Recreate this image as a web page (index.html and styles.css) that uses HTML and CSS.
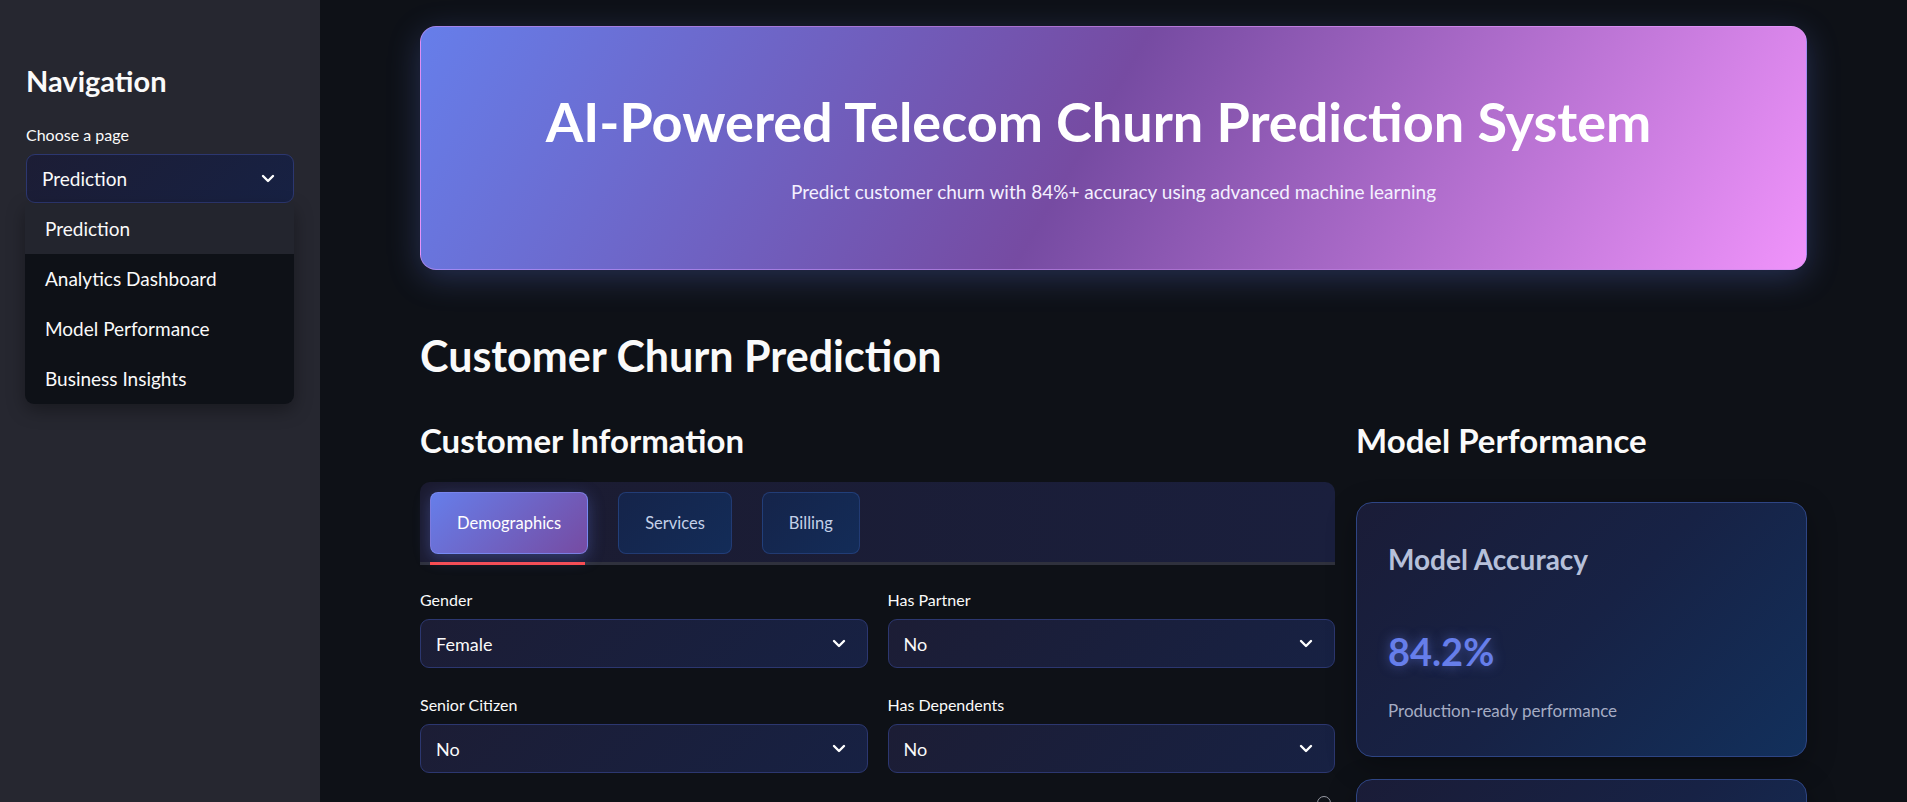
FILE: index.html
```html
<!DOCTYPE html>
<html lang="en">
<head>
<meta charset="utf-8">
<title>AI-Powered Telecom Churn Prediction System</title>
<link rel="stylesheet" href="styles.css">
</head>
<body>
<div class="app">
  <aside class="sidebar">
    <h2 class="side-title">Navigation</h2>
    <div class="side-label">Choose a page</div>
    <div class="side-select-wrap">
      <div class="select side-select">
        <span>Prediction</span>
        <svg class="chev" viewBox="0 0 14 9" width="14" height="9"><path d="M2 2l5 5 5-5" fill="none" stroke="#fff" stroke-width="2.4" stroke-linecap="round" stroke-linejoin="round"/></svg>
      </div>
      <ul class="menu">
        <li class="menu-item active">Prediction</li>
        <li class="menu-item">Analytics Dashboard</li>
        <li class="menu-item">Model Performance</li>
        <li class="menu-item">Business Insights</li>
      </ul>
    </div>
  </aside>
  <main class="main">
    <section class="hero">
      <h1 class="hero-title">AI-Powered Telecom Churn Prediction System</h1>
      <p class="hero-sub">Predict customer churn with 84%+ accuracy using advanced machine learning</p>
    </section>
    <h2 class="page-title">Customer Churn Prediction</h2>
    <div class="cols">
      <div class="col-left">
        <h3 class="sec-title">Customer Information</h3>
        <div class="tabs">
          <div class="tab-row">
            <div class="tab active">Demographics</div>
            <div class="tab">Services</div>
            <div class="tab">Billing</div>
          </div>
          <div class="tab-line"><div class="tab-ind"></div></div>
        </div>
        <div class="form">
          <div class="field">
            <label class="flabel">Gender</label>
            <div class="select"><span>Female</span><svg class="chev" viewBox="0 0 14 9" width="14" height="9"><path d="M2 2l5 5 5-5" fill="none" stroke="#fff" stroke-width="2.4" stroke-linecap="round" stroke-linejoin="round"/></svg></div>
          </div>
          <div class="field">
            <label class="flabel">Has Partner</label>
            <div class="select"><span>No</span><svg class="chev" viewBox="0 0 14 9" width="14" height="9"><path d="M2 2l5 5 5-5" fill="none" stroke="#fff" stroke-width="2.4" stroke-linecap="round" stroke-linejoin="round"/></svg></div>
          </div>
          <div class="field">
            <label class="flabel">Senior Citizen</label>
            <div class="select"><span>No</span><svg class="chev" viewBox="0 0 14 9" width="14" height="9"><path d="M2 2l5 5 5-5" fill="none" stroke="#fff" stroke-width="2.4" stroke-linecap="round" stroke-linejoin="round"/></svg></div>
          </div>
          <div class="field">
            <label class="flabel">Has Dependents</label>
            <div class="select"><span>No</span><svg class="chev" viewBox="0 0 14 9" width="14" height="9"><path d="M2 2l5 5 5-5" fill="none" stroke="#fff" stroke-width="2.4" stroke-linecap="round" stroke-linejoin="round"/></svg></div>
          </div>
          <div class="field wide">
            <div class="help-row"><span class="help"></span></div>
          </div>
        </div>
      </div>
      <div class="col-right">
        <h3 class="sec-title">Model Performance</h3>
        <div class="card">
          <div class="card-title">Model Accuracy</div>
          <div class="card-value">84.2%</div>
          <div class="card-note">Production-ready performance</div>
        </div>
        <div class="card card-next"></div>
      </div>
    </div>
  </main>
</div>
</body>
</html>
```

FILE: styles.css
```css
* { box-sizing: border-box; }
html, body { margin: 0; padding: 0; }
body {
  background: #0e1117;
  color: #fafafa;
  font-family: Lato, "Noto Sans", sans-serif;
  width: 1907px;
  height: 802px;
  overflow: hidden;
}
.app { display: flex; height: 802px; }

/* Sidebar */
.sidebar {
  width: 320px;
  flex: none;
  background: #262730;
  padding: 64px 26px 0 26px;
}
.side-title {
  margin: 0;
  font-size: 29px;
  font-weight: 700;
  line-height: 1.2;
  color: #fafafa;
}
.side-label {
  margin-top: 25px;
  font-size: 16px;
  line-height: 22px;
  color: #fafafa;
}
.side-select-wrap { position: relative; margin-top: 8px; }
.select {
  height: 49px;
  border: 1px solid #2c3770;
  border-radius: 9px;
  background: linear-gradient(135deg, #1c1d35 0%, #172143 100%);
  display: flex;
  align-items: center;
  justify-content: space-between;
  padding: 0 21px 0 15px;
  font-size: 18px;
  color: #fafafa;
}
.side-select { padding: 0 18px 0 15px; font-size: 19px; }
.chev { display: block; }
.menu {
  position: absolute;
  left: -1px;
  right: 0;
  top: 50px;
  margin: 0;
  padding: 0;
  list-style: none;
  background: #0e1117;
  border-radius: 0 0 9px 9px;
  box-shadow: 0 6px 18px rgba(0,0,0,0.35);
  overflow: hidden;
}
.menu-item {
  height: 50px;
  line-height: 50px;
  padding-left: 20px;
  font-size: 19px;
  color: #fafafa;
}
.menu-item.active { background: #23252e; }

/* Main */
.main {
  flex: 1;
  padding: 26px 100px 0 100px;
  min-width: 0;
}
.hero {
  height: 244px;
  border-radius: 16px;
  border: 1px solid rgba(220,150,250,0.5);
  background: linear-gradient(120deg, #667eea 0%, #764ba2 48%, #f093fb 100%);
  box-shadow: 0 8px 32px rgba(102,126,234,0.28);
  text-align: center;
  padding-top: 63px;
}
.hero-title {
  margin: 0;
  padding-right: 30px;
  font-size: 54px;
  font-weight: 700;
  line-height: 1.2;
  color: #ffffff;
}
.hero-sub {
  margin: 26px 0 0 0;
  font-size: 19px;
  line-height: 1.2;
  color: #f4f0ff;
}
.page-title {
  margin: 60px 0 0 0;
  font-size: 43px;
  font-weight: 700;
  line-height: 1.2;
  color: #fafafa;
}
.cols {
  display: grid;
  grid-template-columns: 915px 451px;
  column-gap: 21px;
  margin-top: 39px;
}
.sec-title {
  margin: 0;
  font-size: 33px;
  font-weight: 700;
  line-height: 1.2;
  color: #fafafa;
}

/* Tabs */
.tabs {
  margin-top: 22px;
  border-radius: 10px 10px 0 0;
  background: linear-gradient(90deg, #1b1b30 0%, #1a1f3d 100%);
  padding: 10px 0 0 0;
}
.tab-row { display: flex; gap: 30px; padding-left: 10px; }
.tab {
  height: 62px;
  display: flex;
  align-items: center;
  padding: 0 26px;
  border-radius: 8px;
  border: 1px solid rgba(60,100,190,0.35);
  background: linear-gradient(135deg, #15244a 0%, #132c58 100%);
  font-size: 16.5px;
  color: #c3d0e8;
}
.tab.active {
  background: linear-gradient(135deg, #667eea 0%, #764ba2 100%);
  border-color: rgba(130,150,255,0.6);
  color: #ffffff;
  box-shadow: 0 4px 16px rgba(102,126,234,0.35);
}
.tab-line {
  margin-top: 8px;
  height: 3px;
  background: #2f313d;
}
.tab-ind {
  margin-left: 10px;
  width: 155px;
  height: 3px;
  background: #ff4b4b;
}

/* Form */
.form {
  display: grid;
  grid-template-columns: 1fr 1fr;
  column-gap: 20px;
  row-gap: 26px;
  margin-top: 24px;
}
.field { display: flex; flex-direction: column; gap: 8px; }
.field.wide { grid-column: 1 / 3; }
.flabel {
  font-size: 16px;
  line-height: 22px;
  color: #fafafa;
}
.help-row { display: flex; justify-content: flex-end; padding-right: 4px; }
.help {
  display: block;
  width: 14px;
  height: 14px;
  border-radius: 50%;
  border: 1.5px solid #9a9ca6;
  margin-top: -3px;
}

/* Cards */
.card {
  margin-top: 42px;
  height: 255px;
  border-radius: 16px;
  border: 1.5px solid #2e4584;
  background: linear-gradient(135deg, #1a1c37 0%, #172245 50%, #12305c 100%);
  box-shadow: 0 8px 30px rgba(0,0,0,0.3);
  padding: 40px 32px 0 31px;
}
.card-title {
  font-size: 28px;
  font-weight: 700;
  line-height: 1.2;
  color: #b6c0da;
}
.card-value {
  margin-top: 52px;
  font-size: 38px;
  font-weight: 700;
  line-height: 1.2;
  color: #667eea;
  text-shadow: 0 0 12px rgba(102,126,234,0.55);
}
.card-note {
  margin-top: 27px;
  font-size: 17px;
  line-height: 1.2;
  color: #a5acc4;
}
.card-next { margin-top: 22px; padding: 0; }
```
